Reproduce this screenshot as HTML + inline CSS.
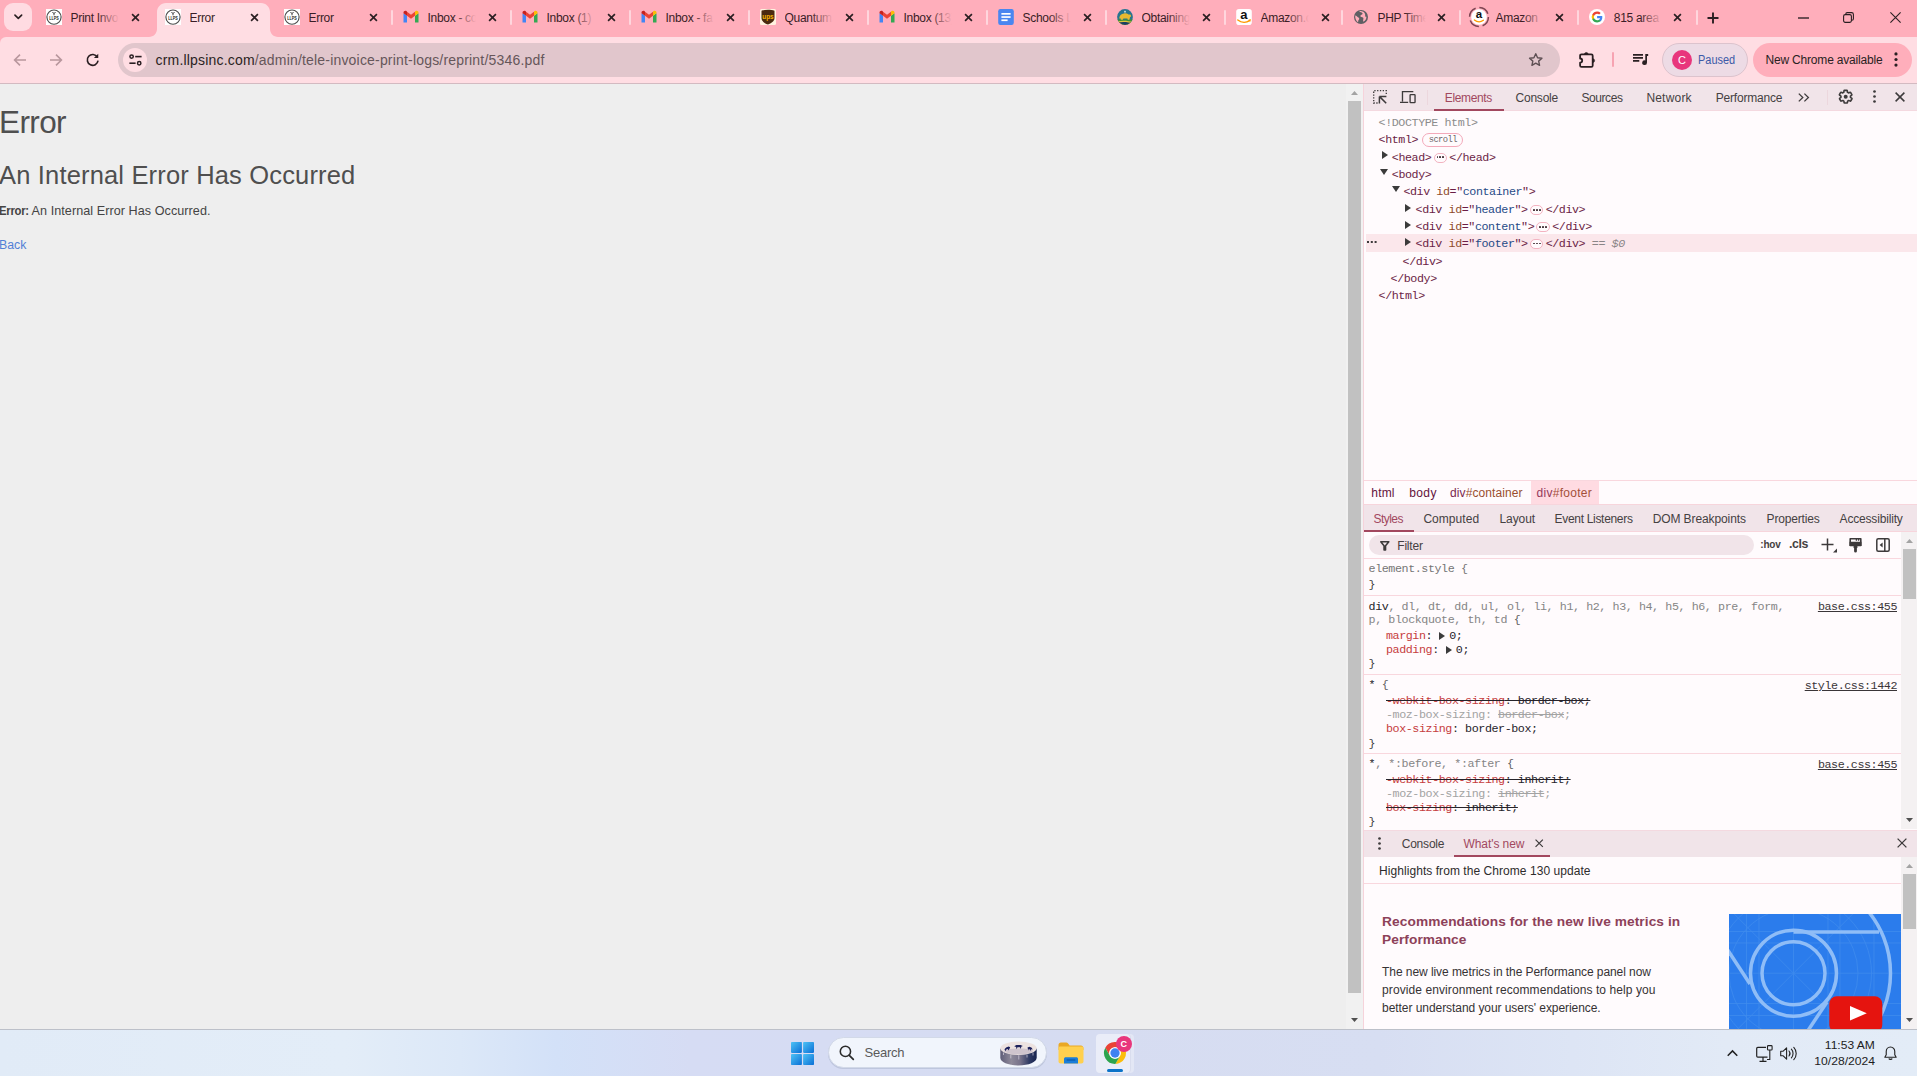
<!DOCTYPE html>
<html lang="en">
<head>
<meta charset="utf-8">
<title>Error</title>
<style>
*{box-sizing:border-box}
html,body{margin:0;padding:0}
body{width:1917px;height:1076px;position:relative;overflow:hidden;background:#eeeeee;font-family:"Liberation Sans",sans-serif;-webkit-font-smoothing:antialiased}
.abs{position:absolute}
svg{display:block;overflow:visible}
/* ---------- tab strip ---------- */
#tabstrip{position:absolute;left:0;top:0;width:1917px;height:50px;background:#ffaebb}
#toolbar{position:absolute;left:0;top:37px;width:1917px;height:46px;background:#ffdde3;border-top-left-radius:6px}
#tbline{position:absolute;left:0;top:83px;width:1917px;height:1px;background:#d3bac1}
.tab{position:absolute;top:3px;height:34px;width:113px}
.tab .fav{position:absolute;left:8px;top:6px;width:16px;height:16px}
.tab .ttl{position:absolute;left:32.5px;top:6.5px;width:48.5px;height:17px;overflow:hidden;white-space:nowrap;font-size:12px;line-height:16px;color:#3a1d26;letter-spacing:-0.3px}
.tab .ttl::after{content:"";position:absolute;right:0;top:0;width:22px;height:17px;background:linear-gradient(90deg,rgba(255,174,187,0),#ffaebb)}
.tab.active .ttl::after{background:linear-gradient(90deg,rgba(255,221,227,0),#ffdde3)}
.tab .cls{position:absolute;left:93px;top:9.8px;width:9px;height:9px}
.sep{position:absolute;top:10px;width:2px;height:15px;background:#ffd6dd;border-radius:1px}
#activebg{position:absolute;top:3px}
.badge{display:inline-block;font-size:8.8px;letter-spacing:-0.6px;line-height:12.6px;height:13.2px;padding:0 5.4px 0 6px;border:1px solid #f3a9ba;border-radius:7px;color:#6b6668;margin-left:3.6px;vertical-align:0.9px}

#dt{position:absolute;left:1363px;top:84px;width:554px;height:945px;background:#fffbfd;border-left:1px solid #f6d3db}
.dtbar{position:absolute;left:1364px;width:553px;background:#f1e4e9}
.dttab{position:absolute;font-size:12px;line-height:16px;color:#454142;white-space:nowrap;letter-spacing:-0.3px}
.mono{font-family:"Liberation Mono",monospace;font-size:11.7px;letter-spacing:-0.42px;white-space:pre}
.trow{position:absolute;height:17.3px;line-height:17.3px}
.srow{position:absolute;height:14.2px;line-height:14.2px}
.ell{display:inline-block;width:13.4px;height:9.8px;border:1px solid #f3b3c1;border-radius:5px;margin:0 2.4px 0 2.2px;vertical-align:-1.9px;position:relative;background:#fffbfd}
.ell i{position:absolute;top:2.6px;width:1.9px;height:1.9px;background:#4a3a3f;border-radius:0.6px}
.ell i:nth-child(1){left:2px}.ell i:nth-child(2){left:4.9px}.ell i:nth-child(3){left:7.8px}
.hline{position:absolute;height:1px;background:#f9d7de}
.pn{color:#c63d3e}.pv{color:#26232a}.gr{color:#a3a3a3}
.st{text-decoration:line-through;text-decoration-color:#26232a}
.lnk{position:absolute;text-decoration:underline;color:#3a3538}

#t_el{letter-spacing:-0.362px!important}
#t_co{letter-spacing:-0.222px!important}
#t_so{letter-spacing:-0.405px!important}
#t_ne{letter-spacing:0.197px!important}
#t_pe{letter-spacing:-0.19px!important}
#b_html{letter-spacing:0.176px!important}
#b_body{letter-spacing:0.356px!important}
#b_cont{letter-spacing:0.092px!important}
#b_foot{letter-spacing:0.266px!important}
#s_st{letter-spacing:-0.518px!important}
#s_cp{letter-spacing:0.046px!important}
#s_la{letter-spacing:-0.086px!important}
#s_ev{letter-spacing:-0.316px!important}
#s_dom{letter-spacing:-0.1px!important}
#s_pr{letter-spacing:-0.167px!important}
#s_ac{letter-spacing:-0.18px!important}
#f_filter{letter-spacing:-0.214px!important}
#f_hov{letter-spacing:-0.203px!important}
#f_cls{letter-spacing:-0.457px!important}
#d_co{letter-spacing:-0.205px!important}
#d_wn{letter-spacing:-0.062px!important}
#w_hl{letter-spacing:0.054px!important}
#w_h1{letter-spacing:0.089px!important}
#w_h2{letter-spacing:0.061px!important}
#w_p1{letter-spacing:-0.068px!important}
#w_p2{letter-spacing:0.085px!important}
#w_p3{letter-spacing:-0.062px!important}
#h1{letter-spacing:-0.6px!important}
#h2{letter-spacing:0.167px!important}
#pmsgr{letter-spacing:0.062px!important}
#back{letter-spacing:-0.015px!important}
#url{letter-spacing:0.187px!important}
#newchrome{letter-spacing:-0.191px!important}
#tsearch{letter-spacing:-0.221px!important}
</style>
</head>
<body>
<div id="tabstrip"></div>
<div id="toolbar"></div>
<div id="tbline"></div>
<div class="abs" style="left:4px;top:3px;width:28px;height:28px;border-radius:9px;background:#ffdbe2"></div>
<svg class="abs" style="left:13.7px;top:14px" width="8.6" height="6" viewBox="0 0 10 7"><path d="M1.1 1.3 L5 5.1 L8.9 1.3" fill="none" stroke="#2a1f22" stroke-width="1.9" stroke-linecap="round" stroke-linejoin="round"/></svg>
<svg id="activebg" style="left:149px" width="129" height="34" viewBox="0 0 129 34"><path d="M0,34 C4.4,34 8,30.4 8,26 L8,9 C8,4 12,0 17,0 L112,0 C117,0 121,4 121,9 L121,26 C121,30.4 124.6,34 129,34 Z" fill="#ffdde3"/></svg>
<div class="tab" style="left:38px"><svg class="fav" viewBox="0 0 16 16"><rect width="16" height="16" fill="#fff"/><circle cx="8" cy="8.1" r="7.1" fill="none" stroke="#4c4c4c" stroke-width="1.15"/><path d="M6.5 3 L8 4.7 L9.5 3 M8 4.7 V6.3" stroke="#222" stroke-width="0.9" fill="none"/><text x="8" y="10.9" font-size="4.5" font-weight="bold" text-anchor="middle" textLength="9.6" lengthAdjust="spacingAndGlyphs" fill="#222" font-family="Liberation Sans, sans-serif">LLPS</text></svg><div class="ttl">Print Invo</div><svg class="cls" style="left:93px" viewBox="0 0 9 9"><path d="M1.1 1.1 L7.9 7.9 M7.9 1.1 L1.1 7.9" stroke="#2a1f22" stroke-width="1.65" fill="none"/></svg></div>
<div class="tab active" style="left:157px"><svg class="fav" viewBox="0 0 16 16"><rect width="16" height="16" fill="#fff"/><circle cx="8" cy="8.1" r="7.1" fill="none" stroke="#4c4c4c" stroke-width="1.15"/><path d="M6.5 3 L8 4.7 L9.5 3 M8 4.7 V6.3" stroke="#222" stroke-width="0.9" fill="none"/><text x="8" y="10.9" font-size="4.5" font-weight="bold" text-anchor="middle" textLength="9.6" lengthAdjust="spacingAndGlyphs" fill="#222" font-family="Liberation Sans, sans-serif">LLPS</text></svg><div class="ttl">Error</div><svg class="cls" style="left:93px" viewBox="0 0 9 9"><path d="M1.1 1.1 L7.9 7.9 M7.9 1.1 L1.1 7.9" stroke="#2a1f22" stroke-width="1.65" fill="none"/></svg></div>
<div class="tab" style="left:276px"><svg class="fav" viewBox="0 0 16 16"><rect width="16" height="16" fill="#fff"/><circle cx="8" cy="8.1" r="7.1" fill="none" stroke="#4c4c4c" stroke-width="1.15"/><path d="M6.5 3 L8 4.7 L9.5 3 M8 4.7 V6.3" stroke="#222" stroke-width="0.9" fill="none"/><text x="8" y="10.9" font-size="4.5" font-weight="bold" text-anchor="middle" textLength="9.6" lengthAdjust="spacingAndGlyphs" fill="#222" font-family="Liberation Sans, sans-serif">LLPS</text></svg><div class="ttl">Error</div><svg class="cls" style="left:93px" viewBox="0 0 9 9"><path d="M1.1 1.1 L7.9 7.9 M7.9 1.1 L1.1 7.9" stroke="#2a1f22" stroke-width="1.65" fill="none"/></svg></div>
<div class="tab" style="left:395px"><svg class="fav" viewBox="0 0 16 16"><path d="M0.5 13.6 V4.2 L4 6.8 V13.6 Z" fill="#4285f4"/><path d="M15.5 13.6 V4.2 L12 6.8 V13.6 Z" fill="#34a853"/><path d="M4 6.8 L8 9.8 L12 6.8 V2.8 L8 5.8 L4 2.8 Z" fill="#ea4335"/><path d="M0.5 4.2 V3.6 C0.5 2 2.4 1.2 3.7 2.2 L4 2.8 V6.8 Z" fill="#c5221f"/><path d="M15.5 4.2 V3.6 C15.5 2 13.6 1.2 12.3 2.2 L12 2.8 V6.8 Z" fill="#fbbc04"/></svg><div class="ttl">Inbox - co</div><svg class="cls" style="left:93px" viewBox="0 0 9 9"><path d="M1.1 1.1 L7.9 7.9 M7.9 1.1 L1.1 7.9" stroke="#2a1f22" stroke-width="1.65" fill="none"/></svg></div>
<div class="tab" style="left:514px"><svg class="fav" viewBox="0 0 16 16"><path d="M0.5 13.6 V4.2 L4 6.8 V13.6 Z" fill="#4285f4"/><path d="M15.5 13.6 V4.2 L12 6.8 V13.6 Z" fill="#34a853"/><path d="M4 6.8 L8 9.8 L12 6.8 V2.8 L8 5.8 L4 2.8 Z" fill="#ea4335"/><path d="M0.5 4.2 V3.6 C0.5 2 2.4 1.2 3.7 2.2 L4 2.8 V6.8 Z" fill="#c5221f"/><path d="M15.5 4.2 V3.6 C15.5 2 13.6 1.2 12.3 2.2 L12 2.8 V6.8 Z" fill="#fbbc04"/></svg><div class="ttl">Inbox (1)</div><svg class="cls" style="left:93px" viewBox="0 0 9 9"><path d="M1.1 1.1 L7.9 7.9 M7.9 1.1 L1.1 7.9" stroke="#2a1f22" stroke-width="1.65" fill="none"/></svg></div>
<div class="tab" style="left:633px"><svg class="fav" viewBox="0 0 16 16"><path d="M0.5 13.6 V4.2 L4 6.8 V13.6 Z" fill="#4285f4"/><path d="M15.5 13.6 V4.2 L12 6.8 V13.6 Z" fill="#34a853"/><path d="M4 6.8 L8 9.8 L12 6.8 V2.8 L8 5.8 L4 2.8 Z" fill="#ea4335"/><path d="M0.5 4.2 V3.6 C0.5 2 2.4 1.2 3.7 2.2 L4 2.8 V6.8 Z" fill="#c5221f"/><path d="M15.5 4.2 V3.6 C15.5 2 13.6 1.2 12.3 2.2 L12 2.8 V6.8 Z" fill="#fbbc04"/></svg><div class="ttl">Inbox - fa</div><svg class="cls" style="left:93px" viewBox="0 0 9 9"><path d="M1.1 1.1 L7.9 7.9 M7.9 1.1 L1.1 7.9" stroke="#2a1f22" stroke-width="1.65" fill="none"/></svg></div>
<div class="tab" style="left:752px"><svg class="fav" viewBox="0 0 16 16"><rect width="16" height="16" rx="1.5" fill="#fff3e0"/><path d="M1.5 1.8 C5 0.4 11 0.4 14.5 1.8 V9 C14.5 12.5 11 14.3 8 15.6 C5 14.3 1.5 12.5 1.5 9 Z" fill="#4a2a10"/><text x="8" y="10.2" font-size="6.4" font-weight="bold" text-anchor="middle" fill="#f5b400" font-family="Liberation Sans, sans-serif">ups</text></svg><div class="ttl">Quantum</div><svg class="cls" style="left:93px" viewBox="0 0 9 9"><path d="M1.1 1.1 L7.9 7.9 M7.9 1.1 L1.1 7.9" stroke="#2a1f22" stroke-width="1.65" fill="none"/></svg></div>
<div class="tab" style="left:871px"><svg class="fav" viewBox="0 0 16 16"><path d="M0.5 13.6 V4.2 L4 6.8 V13.6 Z" fill="#4285f4"/><path d="M15.5 13.6 V4.2 L12 6.8 V13.6 Z" fill="#34a853"/><path d="M4 6.8 L8 9.8 L12 6.8 V2.8 L8 5.8 L4 2.8 Z" fill="#ea4335"/><path d="M0.5 4.2 V3.6 C0.5 2 2.4 1.2 3.7 2.2 L4 2.8 V6.8 Z" fill="#c5221f"/><path d="M15.5 4.2 V3.6 C15.5 2 13.6 1.2 12.3 2.2 L12 2.8 V6.8 Z" fill="#fbbc04"/></svg><div class="ttl">Inbox (13)</div><svg class="cls" style="left:93px" viewBox="0 0 9 9"><path d="M1.1 1.1 L7.9 7.9 M7.9 1.1 L1.1 7.9" stroke="#2a1f22" stroke-width="1.65" fill="none"/></svg></div>
<div class="tab" style="left:990px"><svg class="fav" viewBox="0 0 16 16"><rect x="0.2" y="0" width="15.6" height="16" rx="2.2" fill="#4a86f0"/><rect x="3.4" y="4" width="9.2" height="1.7" fill="#fff"/><rect x="3.4" y="7.2" width="9.2" height="1.7" fill="#fff"/><rect x="3.4" y="10.4" width="6.2" height="1.7" fill="#fff"/></svg><div class="ttl">Schools Li</div><svg class="cls" style="left:93px" viewBox="0 0 9 9"><path d="M1.1 1.1 L7.9 7.9 M7.9 1.1 L1.1 7.9" stroke="#2a1f22" stroke-width="1.65" fill="none"/></svg></div>
<div class="tab" style="left:1109px"><svg class="fav" viewBox="0 0 16 16"><defs><clipPath id="sealc"><circle cx="8" cy="8" r="7.9"/></clipPath></defs><g clip-path="url(#sealc)"><rect width="16" height="16" fill="#27748f"/><rect y="10.4" width="16" height="6" fill="#3d8f3c"/><path d="M0 12.6 C5 11.4 11 11.6 16 13.4 V16 H0 Z" fill="#e3c33c"/><path d="M0 13.8 C5 12.6 11 12.8 16 14.6 V16 H0 Z" fill="#1c3f63"/><path d="M2.2 9.6 C2.2 6.6 4.2 4.6 7 4.4 C9 4.2 10.4 4.6 11.6 5.4 L13.4 5.6 L14.2 7.2 L13 8.2 L12.4 10.8 H10.8 L10.4 9.4 H6.4 L5.8 10.8 H3.8 L3.6 9.4 Z" fill="#e8b92f"/><path d="M8 1.4 L8.5 2.5 L9.6 2.6 L8.8 3.3 L9 4.4 L8 3.8 L7 4.4 L7.2 3.3 L6.4 2.6 L7.5 2.5 Z" fill="#e9f2f5" transform="translate(0,-0.3) scale(0.8) translate(2,0.6)"/></g></svg><div class="ttl">Obtaining</div><svg class="cls" style="left:93px" viewBox="0 0 9 9"><path d="M1.1 1.1 L7.9 7.9 M7.9 1.1 L1.1 7.9" stroke="#2a1f22" stroke-width="1.65" fill="none"/></svg></div>
<div class="tab" style="left:1228px"><svg class="fav" viewBox="0 0 16 16"><rect x="0.2" y="0" width="15.6" height="16" rx="2.8" fill="#fff"/><text x="7.8" y="9.8" font-size="13" font-weight="bold" text-anchor="middle" fill="#111" font-family="Liberation Sans, sans-serif">a</text><path d="M1.8 11 C5.6 14 10.4 13.8 13.6 11.6" stroke="#f90" stroke-width="1.5" fill="none" stroke-linecap="round"/><path d="M14.8 10 L14.3 12.8 L12 11 Z" fill="#f90"/></svg><div class="ttl">Amazon.c</div><svg class="cls" style="left:93px" viewBox="0 0 9 9"><path d="M1.1 1.1 L7.9 7.9 M7.9 1.1 L1.1 7.9" stroke="#2a1f22" stroke-width="1.65" fill="none"/></svg></div>
<div class="tab" style="left:1345px"><svg class="fav" viewBox="0 0 16 16"><circle cx="8" cy="8" r="7" fill="#5f5f63"/><path d="M6.2 2.2 C7 3.4 9.4 3 9.6 4.6 C9.7 5.8 7.6 5.6 7.4 7 C7.2 8.2 9.4 7.8 10.2 8.8 C11 9.8 9.6 11.4 10.4 12.8 C12.6 11.6 13.6 9.6 13.4 7.4 C12.8 8 12 7.4 12.2 6.4 C12.4 5.2 11.6 3.6 10.4 2.8 C9 2 7.4 1.9 6.2 2.2 Z" fill="#ffaebb"/><path d="M2.2 6.4 C3.6 6.6 4.2 7.8 5.4 8.4 C6.6 9 6.4 10.4 5.6 11 C5 11.6 5.4 12.8 5 13.2 C3.2 12 2 9.4 2.2 6.4 Z" fill="#ffaebb"/></svg><div class="ttl">PHP Time</div><svg class="cls" style="left:91.5px" viewBox="0 0 9 9"><path d="M1.1 1.1 L7.9 7.9 M7.9 1.1 L1.1 7.9" stroke="#2a1f22" stroke-width="1.65" fill="none"/></svg></div>
<div class="tab" style="left:1463px"><svg class="fav" viewBox="0 0 16 16" style="overflow:visible"><circle cx="8" cy="8" r="9.4" fill="none" stroke="#7d4552" stroke-width="1.5" stroke-dasharray="11 3.8"/><circle cx="8" cy="8" r="7.8" fill="#fff"/><text x="8" y="9.4" font-size="11.5" font-weight="bold" text-anchor="middle" fill="#111" font-family="Liberation Sans, sans-serif">a</text><path d="M3.4 11 C6.2 13.2 9.8 13.2 12.4 11.2" stroke="#f90" stroke-width="1.3" fill="none" stroke-linecap="round"/></svg><div class="ttl">Amazon</div><svg class="cls" style="left:91.5px" viewBox="0 0 9 9"><path d="M1.1 1.1 L7.9 7.9 M7.9 1.1 L1.1 7.9" stroke="#2a1f22" stroke-width="1.65" fill="none"/></svg></div>
<div class="tab" style="left:1581.3px"><svg class="fav" viewBox="0 0 16 16"><circle cx="8" cy="8" r="8" fill="#fff"/><path d="M13.3 8.13c0-.4-.04-.78-.1-1.14H8.1v2.16h2.92a2.5 2.5 0 0 1-1.08 1.64v1.36h1.75c1.02-.94 1.61-2.33 1.61-4.02z" fill="#4285f4"/><path d="M8.1 13.4c1.46 0 2.68-.48 3.58-1.3l-1.75-1.36c-.48.32-1.1.52-1.83.52-1.41 0-2.6-.95-3.03-2.23H3.27v1.4A5.4 5.4 0 0 0 8.1 13.4z" fill="#34a853"/><path d="M5.07 9.03a3.25 3.25 0 0 1 0-2.06v-1.4H3.27a5.4 5.4 0 0 0 0 4.86l1.8-1.4z" fill="#fbbc05"/><path d="M8.1 4.74c.8 0 1.5.27 2.07.8l1.55-1.55A5.2 5.2 0 0 0 8.1 2.6a5.4 5.4 0 0 0-4.83 2.97l1.8 1.4C5.5 5.69 6.69 4.74 8.1 4.74z" fill="#ea4335"/></svg><div class="ttl">815 area</div><svg class="cls" style="left:91.5px" viewBox="0 0 9 9"><path d="M1.1 1.1 L7.9 7.9 M7.9 1.1 L1.1 7.9" stroke="#2a1f22" stroke-width="1.65" fill="none"/></svg></div>
<div class="sep" style="left:391px"></div>
<div class="sep" style="left:510px"></div>
<div class="sep" style="left:629px"></div>
<div class="sep" style="left:748px"></div>
<div class="sep" style="left:867px"></div>
<div class="sep" style="left:986px"></div>
<div class="sep" style="left:1105px"></div>
<div class="sep" style="left:1224px"></div>
<div class="sep" style="left:1341px"></div>
<div class="sep" style="left:1459px"></div>
<div class="sep" style="left:1577.3px"></div>
<div class="sep" style="left:1695.8px"></div>
<svg class="abs" style="left:1706.5px;top:11.5px" width="12" height="12" viewBox="0 0 12 12"><path d="M6 0.5 V11.5 M0.5 6 H11.5" stroke="#2a1f22" stroke-width="1.9" fill="none"/></svg>
<svg class="abs" style="left:1798px;top:16.5px" width="11" height="2" viewBox="0 0 11 2"><path d="M0 1 H11" stroke="#2a1f22" stroke-width="1.35"/></svg>
<svg class="abs" style="left:1843px;top:11.5px" width="11" height="11" viewBox="0 0 11 11"><rect x="0.6" y="2.6" width="7.8" height="7.8" rx="1.6" fill="none" stroke="#2a1f22" stroke-width="1.1"/><path d="M2.8 2.4 V2 C2.8 1.1 3.5 0.6 4.2 0.6 H8.6 C9.6 0.6 10.4 1.4 10.4 2.4 V6.8 C10.4 7.6 9.8 8.2 9 8.2 H8.6" fill="none" stroke="#2a1f22" stroke-width="1.1"/></svg>
<svg class="abs" style="left:1889.5px;top:11.5px" width="11" height="11" viewBox="0 0 11 11"><path d="M0.4 0.4 L10.6 10.6 M10.6 0.4 L0.4 10.6" stroke="#2a1f22" stroke-width="1.1" fill="none"/></svg>
<svg class="abs" style="left:13px;top:53px" width="14" height="14" viewBox="0 0 14 14"><path d="M13 7 H2 M7 1.6 L1.6 7 L7 12.4" fill="none" stroke="#b9979d" stroke-width="1.6"/></svg>
<svg class="abs" style="left:48.5px;top:53px" width="14" height="14" viewBox="0 0 14 14"><path d="M1 7 H12 M7 1.6 L12.4 7 L7 12.4" fill="none" stroke="#b9979d" stroke-width="1.6"/></svg>
<svg class="abs" style="left:85.5px;top:53.2px" width="13.5" height="13.5" viewBox="0 0 15 15"><path d="M12.6 4.6 A6 6 0 1 0 13.4 8.6" fill="none" stroke="#2a1f22" stroke-width="1.8"/><path d="M13.6 0.8 V5.6 H8.8 Z" fill="#2a1f22"/></svg>
<div class="abs" style="left:118px;top:43px;width:1442px;height:34px;border-radius:17px;background:#e1c6cc"></div>
<div class="abs" style="left:123px;top:48px;width:24px;height:24px;border-radius:12px;background:#ffdde3"></div>
<svg class="abs" style="left:128.5px;top:53.5px" width="13" height="12" viewBox="0 0 13 12"><circle cx="2.6" cy="2.6" r="1.7" fill="none" stroke="#2a1f22" stroke-width="1.5"/><path d="M6.2 2.6 H12.6" stroke="#2a1f22" stroke-width="1.6"/><path d="M0.4 9.2 H6.6" stroke="#2a1f22" stroke-width="1.6"/><circle cx="10.2" cy="9.2" r="1.7" fill="none" stroke="#2a1f22" stroke-width="1.5"/></svg>
<div id="url" class="abs" style="left:155.5px;top:51px;height:18px;font-size:14px;line-height:18px;white-space:nowrap;color:#66565a;letter-spacing:-0.16px"><span style="color:#2a1f22">crm.llpsinc.com</span>/admin/tele-invoice-print-logs/reprint/5346.pdf</div>
<svg class="abs" style="left:1528.3px;top:52px" width="15.5" height="15.5" viewBox="0 0 17 17"><path d="M8.5 1.9 L10.5 6.3 L15.3 6.8 L11.7 10 L12.7 14.7 L8.5 12.3 L4.3 14.7 L5.3 10 L1.7 6.8 L6.5 6.3 Z" fill="none" stroke="#5d4f53" stroke-width="1.5" stroke-linejoin="round"/></svg>
<svg class="abs" style="left:1578.6px;top:50.7px" width="17" height="17" viewBox="0 0 17 17"><path d="M2.5 3.4 H12.3 Q13.7 3.4 13.7 4.8 V14.4 Q13.7 15.8 12.3 15.8 H2.5 Q1.1 15.8 1.1 14.4 V11.7 A2.1 2.1 0 0 0 1.1 7.5 V4.8 Q1.1 3.4 2.5 3.4 Z" fill="none" stroke="#2a1f22" stroke-width="1.8" stroke-linejoin="round"/><path d="M5.4 3.4 A1.9 1.9 0 0 1 9.2 3.4 Z M13.7 7.7 A1.9 1.9 0 0 1 13.7 11.5 Z" fill="#2a1f22" stroke="#2a1f22" stroke-width="0.6"/></svg>
<div class="abs" style="left:1612px;top:52px;width:2px;height:15px;border-radius:1px;background:#f7a3b2"></div>
<svg class="abs" style="left:1632.7px;top:53.7px" width="15.2" height="11.2" viewBox="0 0 15.2 11.2"><path d="M0 0.9 H10 M0 3.9 H10 M0 6.9 H6.3" stroke="#2a1f22" stroke-width="1.65"/><path d="M12.3 0 H15.2 V1.9 H14 V8.6 A2.4 2.4 0 1 1 12.3 6.4 Z" fill="#2a1f22"/></svg>
<div class="abs" style="left:1662px;top:43px;width:86px;height:34px;border-radius:17px;background:#eddbe5;border:1px solid #dcc3cd"></div>
<div class="abs" style="left:1672px;top:50px;width:20px;height:20px;border-radius:10px;background:#e8367c;color:#fff;font-size:11px;line-height:20px;text-align:center">C</div>
<div id="paused" class="abs" style="left:1698.3px;top:51.5px;font-size:12.3px;line-height:16px;color:#3c5aa8;white-space:nowrap;transform:scaleX(0.89);transform-origin:0 50%">Paused</div>
<div class="abs" style="left:1752.8px;top:43px;width:159.2px;height:34px;border-radius:17px;background:#ffaebb"></div>
<div id="newchrome" class="abs" style="left:1765.5px;top:51.5px;font-size:12px;line-height:16px;color:#2a1f22;letter-spacing:-0.38px;white-space:nowrap">New Chrome available</div>
<svg class="abs" style="left:1893.7px;top:52.3px" width="4" height="15" viewBox="0 0 4 15"><circle cx="2" cy="1.9" r="1.6" fill="#2a1f22"/><circle cx="2" cy="7.5" r="1.6" fill="#2a1f22"/><circle cx="2" cy="13.1" r="1.6" fill="#2a1f22"/></svg>
<div id="h1" class="abs" style="left:-1px;top:103.3px;font-size:31.5px;line-height:38px;color:#4f4f4f;white-space:nowrap;letter-spacing:-0.7px">Error</div>
<div id="h2" class="abs" style="left:-1px;top:159.6px;font-size:25.5px;line-height:30px;color:#4f4f4f;white-space:nowrap;letter-spacing:-0.3px">An Internal Error Has Occurred</div>
<div id="pmsg" class="abs" style="left:-1px;top:203px;font-size:12.6px;line-height:16px;color:#444;white-space:nowrap;letter-spacing:-0.3px"><b id="pmsgb" style="display:inline-block;transform:scaleX(0.9);transform-origin:0 50%;margin-right:-3.5px">Error:</b><span id="pmsgr"> An Internal Error Has Occurred.</span></div>
<div id="back" class="abs" style="left:-1px;top:236.8px;font-size:12.3px;line-height:16px;color:#5180d6;white-space:nowrap;letter-spacing:-0.3px">Back</div>
<div class="abs" style="left:1346px;top:84px;width:17px;height:945px;background:#f1f1f1"></div>
<div class="abs" style="left:1348px;top:101px;width:13px;height:892px;background:#c1c1c1"></div>
<svg class="abs" style="left:1351px;top:91px" width="7" height="4" viewBox="0 0 7 4"><path d="M0 4 L3.5 0 L7 4 Z" fill="#a3a3a3"/></svg>
<svg class="abs" style="left:1351px;top:1018px" width="7" height="4" viewBox="0 0 7 4"><path d="M0 0 L3.5 4 L7 0 Z" fill="#505050"/></svg>
<div id="dt"></div>
<div class="dtbar" style="top:84px;height:26px"></div>
<div class="hline" style="left:1364px;top:110px;width:553px;background:#f4d9e0"></div>
<svg class="abs" style="left:1373px;top:89.6px" width="14" height="14" viewBox="0 0 14 14"><path d="M4.6 13 H0.7 V0.7 H13.3 V4.6" fill="none" stroke="#3d3a3b" stroke-width="1.3" stroke-dasharray="1.3 1.5"/><path d="M6.4 6.4 H13.4 M6.4 6.4 V13.4 M6.6 6.6 L13.2 13.2" stroke="#3d3a3b" stroke-width="1.5" fill="none"/></svg>
<svg class="abs" style="left:1400.2px;top:90.8px" width="16.2" height="12.4" viewBox="0 0 17 13"><path d="M14 0.7 H2.6 V11 M0 11.9 H8.6" fill="none" stroke="#3d3a3b" stroke-width="1.4"/><rect x="10.6" y="3.8" width="5.2" height="8.4" rx="0.6" fill="none" stroke="#3d3a3b" stroke-width="1.4"/></svg>
<div class="abs" style="left:1427px;top:90px;width:1px;height:15px;background:#ecd7dd"></div>
<div id="t_el" class="dttab" style="left:1444.8px;top:89.5px;color:#a2485f">Elements</div>
<div id="t_co" class="dttab" style="left:1515.5px;top:89.5px">Console</div>
<div id="t_so" class="dttab" style="left:1581.4px;top:89.5px">Sources</div>
<div id="t_ne" class="dttab" style="left:1646.4px;top:89.5px">Network</div>
<div id="t_pe" class="dttab" style="left:1715.7px;top:89.5px">Performance</div>
<div class="abs" style="left:1433.5px;top:108.5px;width:70.5px;height:2px;background:#a2485f"></div>
<svg class="abs" style="left:1798px;top:92.5px" width="12" height="9" viewBox="0 0 12 9"><path d="M0.8 0.6 L4.8 4.5 L0.8 8.4 M6.4 0.6 L10.4 4.5 L6.4 8.4" fill="none" stroke="#3d3a3b" stroke-width="1.3"/></svg>
<div class="abs" style="left:1827px;top:90px;width:1px;height:15px;background:#ecd7dd"></div>
<svg class="abs" style="left:1838px;top:89.4px" width="15.4" height="15.4" viewBox="0 0 24 24"><path d="M19.4 13a7.5 7.5 0 0 0 0-2l2.1-1.6a.5.5 0 0 0 .1-.6l-2-3.5a.5.5 0 0 0-.6-.2l-2.5 1a7.3 7.3 0 0 0-1.7-1l-.4-2.6a.5.5 0 0 0-.5-.4h-4a.5.5 0 0 0-.5.4l-.4 2.6a7.3 7.3 0 0 0-1.7 1l-2.5-1a.5.5 0 0 0-.6.2l-2 3.5a.5.5 0 0 0 .1.6L4.6 11a7.5 7.5 0 0 0 0 2l-2.1 1.6a.5.5 0 0 0-.1.6l2 3.5c.1.2.400.3.600.2l2.5-1c.5.4 1.1.700 1.7 1l.4 2.6c0 .2.2.4.5.4h4c.2 0 .5-.2.5-.4l.4-2.6a7.3 7.3 0 0 0 1.7-1l2.5 1c.2.1.5 0 .6-.2l2-3.5a.5.5 0 0 0-.1-.6z" fill="none" stroke="#3d3a3b" stroke-width="2.5" stroke-linejoin="round"/><circle cx="12" cy="12" r="3.1" fill="#3d3a3b"/></svg>
<svg class="abs" style="left:1872.7px;top:90.2px" width="3" height="13" viewBox="0 0 3 13"><circle cx="1.5" cy="1.5" r="1.35" fill="#3d3a3b"/><circle cx="1.5" cy="6.5" r="1.35" fill="#3d3a3b"/><circle cx="1.5" cy="11.5" r="1.35" fill="#3d3a3b"/></svg>
<svg class="abs" style="left:1895px;top:91.8px" width="10" height="10" viewBox="0 0 10 10"><path d="M0.6 0.6 L9.4 9.4 M9.4 0.6 L0.6 9.4" stroke="#3d3a3b" stroke-width="1.5" fill="none"/></svg>
<div class="abs" style="left:1365.5px;top:234.3px;width:551.5px;height:17.3px;background:#fbe7eb"></div>
<div id="tr0" class="trow mono" style="left:1378.6px;top:114.75px"><span style="color:#8c8c8c">&lt;!DOCTYPE html&gt;</span></div>
<div id="tr1" class="trow mono" style="left:1378.6px;top:132.25px"><span style="color:#6b1d45">&lt;html&gt;</span><span class="badge">scroll</span></div>
<div id="tr2" class="trow mono" style="left:1391.8px;top:149.65px"><span style="color:#6b1d45">&lt;head&gt;</span><span class="ell"><i></i><i></i><i></i></span><span style="color:#6b1d45">&lt;/head&gt;</span></div>
<svg class="abs" style="left:1381.7px;top:151.4px" width="6" height="8" viewBox="0 0 6 8"><path d="M0 0 L6 4 L0 8 Z" fill="#3b3b3b"/></svg>
<div id="tr3" class="trow mono" style="left:1391.8px;top:166.85px"><span style="color:#6b1d45">&lt;body&gt;</span></div>
<svg class="abs" style="left:1380.3px;top:168.5px" width="8" height="6" viewBox="0 0 8 6"><path d="M0 0 L8 0 L4 6 Z" fill="#3b3b3b"/></svg>
<div id="tr4" class="trow mono" style="left:1403.4px;top:184.05px"><span style="color:#6b1d45">&lt;div</span> <span style="color:#8e4a2a">id</span><span style="color:#6b1d45">="</span><span style="color:#264a86">container</span><span style="color:#6b1d45">"&gt;</span></div>
<svg class="abs" style="left:1392px;top:185.7px" width="8" height="6" viewBox="0 0 8 6"><path d="M0 0 L8 0 L4 6 Z" fill="#3b3b3b"/></svg>
<div id="tr5" class="trow mono" style="left:1415.6px;top:202.05px"><span style="color:#6b1d45">&lt;div</span> <span style="color:#8e4a2a">id</span><span style="color:#6b1d45">="</span><span style="color:#264a86">header</span><span style="color:#6b1d45">"&gt;</span><span class="ell"><i></i><i></i><i></i></span><span style="color:#6b1d45">&lt;/div&gt;</span></div>
<svg class="abs" style="left:1405.1000000000001px;top:203.8px" width="6" height="8" viewBox="0 0 6 8"><path d="M0 0 L6 4 L0 8 Z" fill="#3b3b3b"/></svg>
<div id="tr6" class="trow mono" style="left:1415.6px;top:219.05px"><span style="color:#6b1d45">&lt;div</span> <span style="color:#8e4a2a">id</span><span style="color:#6b1d45">="</span><span style="color:#264a86">content</span><span style="color:#6b1d45">"&gt;</span><span class="ell"><i></i><i></i><i></i></span><span style="color:#6b1d45">&lt;/div&gt;</span></div>
<svg class="abs" style="left:1405.1000000000001px;top:220.8px" width="6" height="8" viewBox="0 0 6 8"><path d="M0 0 L6 4 L0 8 Z" fill="#3b3b3b"/></svg>
<div id="tr7" class="trow mono" style="left:1415.6px;top:235.85px"><span style="color:#6b1d45">&lt;div</span> <span style="color:#8e4a2a">id</span><span style="color:#6b1d45">="</span><span style="color:#264a86">footer</span><span style="color:#6b1d45">"&gt;</span><span class="ell"><i></i><i></i><i></i></span><span style="color:#6b1d45">&lt;/div&gt;</span><span style="color:#8a8587;font-style:italic"> == $0</span></div>
<svg class="abs" style="left:1405.1000000000001px;top:237.60000000000002px" width="6" height="8" viewBox="0 0 6 8"><path d="M0 0 L6 4 L0 8 Z" fill="#3b3b3b"/></svg>
<div id="tr8" class="trow mono" style="left:1402.6px;top:253.55px"><span style="color:#6b1d45">&lt;/div&gt;</span></div>
<div id="tr9" class="trow mono" style="left:1390.6px;top:270.75px"><span style="color:#6b1d45">&lt;/body&gt;</span></div>
<div id="tr10" class="trow mono" style="left:1378.6px;top:287.85px"><span style="color:#6b1d45">&lt;/html&gt;</span></div>
<svg class="abs" style="left:1367.3px;top:241px" width="10" height="2" viewBox="0 0 10 2"><rect x="0" y="0" width="2" height="2" fill="#3d3a3b"/><rect x="3.8" y="0" width="2" height="2" fill="#3d3a3b"/><rect x="7.6" y="0" width="2" height="2" fill="#3d3a3b"/></svg>
<div class="hline" style="left:1364px;top:480px;width:553px"></div>
<div class="abs" style="left:1530.5px;top:481px;width:68px;height:23px;background:#ffdbe2"></div>
<div id="b_html" class="dttab" style="left:1371.3px;top:484.5px;color:#64143c">html</div>
<div id="b_body" class="dttab" style="left:1409.3px;top:484.5px;color:#64143c">body</div>
<div id="b_cont" class="dttab" style="left:1450px;top:484.5px;color:#7a2850">div<span style="color:#9a4f2e">#container</span></div>
<div id="b_foot" class="dttab" style="left:1536.6px;top:484.5px;color:#94395a">div<span style="color:#a4503a">#footer</span></div>
<div class="dtbar" style="top:504px;height:28px;border-top:1px solid #f7d5dc;border-bottom:1px solid #f7d5dc"></div>
<div id="s_st" class="dttab" style="left:1373.4px;top:510.5px;color:#a2485f">Styles</div>
<div id="s_cp" class="dttab" style="left:1423.4px;top:510.5px">Computed</div>
<div id="s_la" class="dttab" style="left:1499.5px;top:510.5px">Layout</div>
<div id="s_ev" class="dttab" style="left:1554.6px;top:510.5px">Event Listeners</div>
<div id="s_dom" class="dttab" style="left:1652.7px;top:510.5px">DOM Breakpoints</div>
<div id="s_pr" class="dttab" style="left:1766.6px;top:510.5px">Properties</div>
<div id="s_ac" class="dttab" style="left:1839.6px;top:510.5px">Accessibility</div>
<div class="abs" style="left:1364px;top:529.5px;width:50px;height:2.4px;background:#a2485f"></div>
<div class="abs" style="left:1369.2px;top:535.2px;width:384.4px;height:19.8px;border-radius:10px;background:#f1e4e9"></div>
<svg class="abs" style="left:1380.3px;top:540.5px" width="9.6" height="9.6" viewBox="0 0 10 10"><path d="M0.8 0.8 H9.2 L5.8 5 V9.3 H4.2 V5 Z" fill="none" stroke="#3d3a3b" stroke-width="1.6" stroke-linejoin="round"/></svg>
<div id="f_filter" class="dttab" style="left:1397.3px;top:538.1px">Filter</div>
<div id="f_hov" class="dttab" style="left:1760.3px;top:536.8px;font-weight:bold;font-size:10px;letter-spacing:-0.5px">:hov</div>
<div id="f_cls" class="dttab" style="left:1789px;top:536.3px;font-weight:bold;font-size:12.4px;letter-spacing:-0.4px">.cls</div>
<svg class="abs" style="left:1820.5px;top:538px" width="17" height="16" viewBox="0 0 17 16"><path d="M6.5 0.5 V12.5 M0.5 6.5 H12.5" stroke="#3d3a3b" stroke-width="1.5" fill="none"/><path d="M16 10.5 V14.5 H12 Z" fill="#3d3a3b"/></svg>
<svg class="abs" style="left:1848.5px;top:537.5px" width="13" height="15" viewBox="0 0 13 15"><path d="M1.2 0.8 H11.8 V7.4 H1.2 Z" fill="none" stroke="#3d3a3b" stroke-width="1.6" stroke-linejoin="round"/><path d="M1.2 4.3 H11.8 V7.4 H1.2 Z M7.4 0.8 V2.8 M9.6 0.8 V2.8" fill="#3d3a3b" stroke="#3d3a3b" stroke-width="1.3"/><path d="M4.6 7.4 H8.4 V10 H7.9 V13.2 A1.4 1.4 0 0 1 5.1 13.2 V10 H4.6 Z" fill="#3d3a3b"/></svg>
<svg class="abs" style="left:1876px;top:538px" width="14" height="14" viewBox="0 0 14 14"><rect x="0.8" y="0.8" width="12.4" height="12.4" rx="1.5" fill="none" stroke="#3d3a3b" stroke-width="1.5"/><path d="M8.8 0.8 V13.2" stroke="#3d3a3b" stroke-width="1.5"/><path d="M6.6 4.6 V9.4 L3.6 7 Z" fill="#3d3a3b"/></svg>
<div class="hline" style="left:1364px;top:558px;width:537px"></div>
<div id="s0" class="srow mono" style="left:1368.6px;top:562.1px;"><span style="color:#757575">element.style {</span></div>
<div id="s1" class="srow mono" style="left:1368.6px;top:578.1px;"><span style="color:#3f3f3f">}</span></div>
<div class="hline" style="left:1364px;top:595px;width:537px"></div>
<div id="s2" class="srow mono" style="left:1368.6px;top:599.7px;"><span class="pv">div</span><span style="color:#858585">, dl, dt, dd, ul, ol, li, h1, h2, h3, h4, h5, h6, pre, form,</span></div>
<div id="s3" class="srow mono" style="left:1368.6px;top:613.3px;"><span style="color:#858585">p, blockquote, th, td </span><span style="color:#5f5f5f">{</span></div>
<div id="s4" class="srow mono" style="left:1386px;top:629px;"><span class="pn">margin</span><span class="pv">: </span><span class="pv" style="margin-left:10.5px">0;</span></div>
<div id="s5" class="srow mono" style="left:1386px;top:643.1px;"><span class="pn">padding</span><span class="pv">: </span><span class="pv" style="margin-left:10.5px">0;</span></div>
<svg class="abs" style="left:1439px;top:631.5px" width="6" height="8" viewBox="0 0 6 8"><path d="M0 0 L6 4 L0 8 Z" fill="#3b3b3b"/></svg>
<svg class="abs" style="left:1445.5px;top:645.6px" width="6" height="8" viewBox="0 0 6 8"><path d="M0 0 L6 4 L0 8 Z" fill="#3b3b3b"/></svg>
<div id="s6" class="srow mono" style="left:1368.6px;top:657.3px;"><span style="color:#3f3f3f">}</span></div>
<div class="hline" style="left:1364px;top:674px;width:537px"></div>
<div id="s7" class="srow mono" style="left:1368.6px;top:678.3px;"><span class="pv">*</span><span style="color:#5f5f5f"> {</span></div>
<div id="s8" class="srow mono" style="left:1386px;top:693.8px;"><span class="st"><span class="pn">-webkit-box-sizing</span><span class="pv">: border-box;</span></span></div>
<div id="s9" class="srow mono" style="left:1386px;top:708.3px;"><span class="gr">-moz-box-sizing: <span class="st" style="text-decoration-color:#a3a3a3">border-box</span>;</span></div>
<div id="s10" class="srow mono" style="left:1386px;top:722.1px;"><span class="pn">box-sizing</span><span class="pv">: border-box;</span></div>
<div id="s11" class="srow mono" style="left:1368.6px;top:736.5px;"><span style="color:#3f3f3f">}</span></div>
<div class="hline" style="left:1364px;top:753px;width:537px"></div>
<div id="s12" class="srow mono" style="left:1368.6px;top:757px;"><span class="pv">*</span><span style="color:#858585">, *:before, *:after </span><span style="color:#5f5f5f">{</span></div>
<div id="s13" class="srow mono" style="left:1386px;top:772.7px;"><span class="st"><span class="pn">-webkit-box-sizing</span><span class="pv">: inherit;</span></span></div>
<div id="s14" class="srow mono" style="left:1386px;top:787.1px;"><span class="gr">-moz-box-sizing: <span class="st" style="text-decoration-color:#a3a3a3">inherit</span>;</span></div>
<div id="s15" class="srow mono" style="left:1386px;top:801.3px;"><span class="st"><span class="pn">box-sizing</span><span class="pv">: inherit;</span></span></div>
<div id="s16" class="srow mono" style="left:1368.6px;top:815.3px;"><span style="color:#3f3f3f">}</span></div>
<div id="l0" class="srow mono lnk" style="right:20px;top:600.4px">base.css:455</div>
<div id="l1" class="srow mono lnk" style="right:20px;top:679.4px">style.css:1442</div>
<div id="l2" class="srow mono lnk" style="right:20px;top:758.4px">base.css:455</div>
<div class="abs" style="left:1901px;top:532px;width:16px;height:297px;background:#f4f1f2"></div>
<div class="abs" style="left:1903px;top:549px;width:13px;height:49.5px;background:#c1c1c1"></div>
<svg class="abs" style="left:1906px;top:539px" width="7" height="4" viewBox="0 0 7 4"><path d="M0 4 L3.5 0 L7 4 Z" fill="#a3a3a3"/></svg>
<svg class="abs" style="left:1906px;top:817.5px" width="7" height="4" viewBox="0 0 7 4"><path d="M0 0 L3.5 4 L7 0 Z" fill="#505050"/></svg>
<div class="dtbar" style="top:829.5px;height:27.3px;border-top:1px solid #f4d9e0"></div>
<svg class="abs" style="left:1378.3px;top:836.5px" width="3" height="13" viewBox="0 0 3 13"><circle cx="1.5" cy="1.5" r="1.35" fill="#3d3a3b"/><circle cx="1.5" cy="6.5" r="1.35" fill="#3d3a3b"/><circle cx="1.5" cy="11.5" r="1.35" fill="#3d3a3b"/></svg>
<div id="d_co" class="dttab" style="left:1401.7px;top:835.5px">Console</div>
<div id="d_wn" class="dttab" style="left:1463.4px;top:835.5px;color:#a2485f">What's new</div>
<svg class="abs" style="left:1534.6px;top:839px" width="8.4" height="8.4" viewBox="0 0 9 9"><path d="M0.6 0.6 L8.4 8.4 M8.4 0.6 L0.6 8.4" stroke="#3d3a3b" stroke-width="1.3" fill="none"/></svg>
<div class="abs" style="left:1454.4px;top:854.8px;width:95.4px;height:2px;background:#a2485f"></div>
<svg class="abs" style="left:1897px;top:838px" width="10" height="10" viewBox="0 0 10 10"><path d="M0.6 0.6 L9.4 9.4 M9.4 0.6 L0.6 9.4" stroke="#3d3a3b" stroke-width="1.3" fill="none"/></svg>
<div id="w_hl" class="dttab" style="left:1379.1px;top:862.8px;color:#2e2b2c">Highlights from the Chrome 130 update</div>
<div class="hline" style="left:1364px;top:883px;width:537px"></div>
<div id="w_h1" class="dttab" style="left:1382.1px;top:912.5px;font-size:13.7px;line-height:18px;font-weight:bold;color:#8d4159">Recommendations for the new live metrics in</div>
<div id="w_h2" class="dttab" style="left:1382.1px;top:930.5px;font-size:13.7px;line-height:18px;font-weight:bold;color:#8d4159">Performance</div>
<div id="w_p1" class="dttab" style="left:1382.1px;top:964.2px;color:#363234">The new live metrics in the Performance panel now</div>
<div id="w_p2" class="dttab" style="left:1382.1px;top:982.3px;color:#363234">provide environment recommendations to help you</div>
<div id="w_p3" class="dttab" style="left:1382.1px;top:1000px;color:#363234">better understand your users' experience.</div>
<svg class="abs" style="left:1729px;top:914px" width="172" height="115" viewBox="0 0 172 115">
<defs><clipPath id="imgc"><rect width="172" height="115"/></clipPath></defs>
<g clip-path="url(#imgc)"><rect width="172" height="115" fill="#2b7cec"/>
<g stroke="#3f8bee" stroke-width="0.8" fill="none"><path d="M0 17.5 H172 M0 29 H172 M0 59.2 H172 M0 89.5 H172 M0 101.5 H172 M17.5 0 V115 M30 0 V115 M64.5 0 V115 M99 0 V115 M111 0 V115 M145 0 V115"/><path d="M-10 -15.3 L130 124.7 M139 -15.3 L-1 124.7"/><circle cx="64.5" cy="59.2" r="64.5"/><circle cx="64.5" cy="59.2" r="78"/></g>
<g stroke="#8fbdf7" stroke-width="3.5" fill="none"><circle cx="64.5" cy="59.2" r="31.5"/><circle cx="64.5" cy="59.2" r="43"/><circle cx="64.5" cy="59.2" r="97"/><path d="M64.5 18.1 H150"/><path d="M-2 35 L21 70"/><path d="M98 88 L78 118"/></g>
<rect x="100.3" y="82.3" width="53" height="36" rx="7.5" fill="#e5140f"/><path d="M121 92 L137.8 99.3 L121 106.5 Z" fill="#fff"/></g></svg>
<div class="abs" style="left:1901px;top:857px;width:16px;height:172px;background:#f4f1f2"></div>
<div class="abs" style="left:1903px;top:874px;width:13px;height:55px;background:#c1c1c1"></div>
<svg class="abs" style="left:1906px;top:864px" width="7" height="4" viewBox="0 0 7 4"><path d="M0 4 L3.5 0 L7 4 Z" fill="#a3a3a3"/></svg>
<svg class="abs" style="left:1906px;top:1017.5px" width="7" height="4" viewBox="0 0 7 4"><path d="M0 0 L3.5 4 L7 0 Z" fill="#505050"/></svg>
<div class="abs" style="left:0;top:1029px;width:1917px;height:47px;background:linear-gradient(90deg,#e1ebf7 0%,#e3edf8 18%,#dce8f8 24%,#d3e1f8 29%,#d6dcf4 36%,#d6dcf1 57%,#d7def2 72%,#dde5f5 82%,#e2eaf6 90%,#e3ecf7 100%);border-top:1.5px solid #bcc0c9"></div>
<svg class="abs" style="left:791px;top:1042px" width="23" height="23" viewBox="0 0 23 23"><defs><linearGradient id="wl" x1="0" y1="0" x2="1" y2="1"><stop offset="0" stop-color="#4cc2f5"/><stop offset="1" stop-color="#0a6fd6"/></linearGradient></defs><rect x="0" y="0" width="10.9" height="10.9" rx="0.8" fill="url(#wl)"/><rect x="12.1" y="0" width="10.9" height="10.9" rx="0.8" fill="url(#wl)"/><rect x="0" y="12.1" width="10.9" height="10.9" rx="0.8" fill="url(#wl)"/><rect x="12.1" y="12.1" width="10.9" height="10.9" rx="0.8" fill="url(#wl)"/></svg>
<div class="abs" style="left:828px;top:1037px;width:218.5px;height:31px;border-radius:15.5px;background:#f1f5fc;border:1px solid #d2d9e8;box-shadow:0 1px 0 rgba(120,130,160,0.25)"></div>
<svg class="abs" style="left:838.6px;top:1045.3px" width="15.6" height="15.6" viewBox="0 0 17 17"><circle cx="7" cy="7" r="5.6" fill="none" stroke="#2b2b2b" stroke-width="1.7"/><path d="M11.2 11.2 L15.6 15.6" stroke="#2b2b2b" stroke-width="1.9" stroke-linecap="round"/></svg>
<div id="tsearch" class="abs" style="left:864.5px;top:1044px;font-size:13px;line-height:18px;color:#5a5a5a;letter-spacing:-0.15px;white-space:nowrap">Search</div>
<svg class="abs" style="left:1000px;top:1040.5px" width="37" height="25" viewBox="0 0 37 25"><defs><linearGradient id="dr" x1="0" y1="0" x2="1" y2="0"><stop offset="0" stop-color="#5f5d78"/><stop offset="0.3" stop-color="#8f8a9a"/><stop offset="0.55" stop-color="#77728a"/><stop offset="0.8" stop-color="#2f3a63"/><stop offset="1" stop-color="#17234f"/></linearGradient></defs>
<path d="M0.3 7.6 V16.8 C0.3 21.2 8.3 24.5 18.5 24.5 C28.7 24.5 36.7 21.2 36.7 16.8 V7.6 Z" fill="url(#dr)"/>
<ellipse cx="18.5" cy="7.3" rx="18.2" ry="6.7" fill="#ece2e0"/>
<path d="M3.5 10 C7 8.2 12 7.6 18.5 7.6 C25 7.6 30 8.2 33.5 10 C30 12.6 25 13.4 18.5 13.4 C12 13.4 7 12.6 3.5 10 Z" fill="#cfc4cd"/>
<g fill="#1b1f5a"><path d="M4.5 8.2 l1.6-1.7 l2.6-0.9 l1.5 0.6 l-0.7 1.6 l-1.1 1.8 l-0.6-1.6 l-1.5 0.6 l-0.9 1.6 Z"/><path d="M14.2 5.2 l2.2-1.2 l4.2 0.1 l2.2 0.8 l-1.6 0.9 l-0.3 2.2 l-1-1.8 l-2.4 0 l-1 2 l-0.4-2.2 Z"/><path d="M27.5 6.5 l2-0.7 l2.2 1 l1 1.7 l-1.4-0.2 l-0.6 1.6 l-0.7-1.4 l-1.5-0.2 l-0.2 1.5 Z"/></g>
<g stroke="#d9d2df" stroke-width="0.7"><path d="M3.5 11.5 V14 M10.8 13.6 V17.4 M18.8 14.2 V18.5 M27 13.5 V16.5 M33 11.5 V14.5"/></g></svg>
<svg class="abs" style="left:1058px;top:1042px" width="26" height="22" viewBox="0 0 26 22"><path d="M0.5 3 C0.5 1.6 1.5 0.6 2.9 0.6 H8.2 C9 0.6 9.6 0.9 10.1 1.5 L11.6 3.4 H23 C24.4 3.4 25.4 4.4 25.4 5.8 V8 H0.5 Z" fill="#e9a825"/>
<path d="M0.5 6.2 C0.5 5.3 1.3 4.6 2.2 4.6 H23.8 C24.7 4.6 25.5 5.3 25.5 6.2 V19.6 C25.5 20.8 24.5 21.6 23.4 21.6 H2.6 C1.5 21.6 0.5 20.8 0.5 19.6 Z" fill="#ffd04e"/>
<path d="M6 21.6 V16.8 C6 15.8 6.8 15.2 7.7 15.2 H18.3 C19.2 15.2 20 15.8 20 16.8 V21.6 Z" fill="#1a7dd8"/><rect x="8.5" y="17.3" width="9" height="1.4" rx="0.7" fill="#0d5fb0"/></svg>
<div class="abs" style="left:1100px;top:1034px;width:34px;height:38.5px;border-radius:4px;background:#e3e7f5"></div><div class="abs" style="left:1096px;top:1034px;width:34px;height:38.5px;border-radius:4px;background:#eaedf8;box-shadow:1px 0 0 #d9ddee"></div>
<svg class="abs" style="left:1103.2px;top:1041px" width="24" height="24" viewBox="0 0 48 48">
<path d="M4.6 13.61 A22 22 0 0 1 42.69 12.4 L24 12.4 A11.6 11.6 0 0 0 13.95 29.8 Z" fill="#e94235"/>
<path d="M42.69 12.4 A22 22 0 0 1 24.7 45.99 L34.05 29.8 A11.6 11.6 0 0 0 24 12.4 Z" fill="#fbbd0b"/>
<path d="M24.7 45.99 A22 22 0 0 1 4.6 13.61 L13.95 29.8 A11.6 11.6 0 0 0 34.05 29.8 Z" fill="#2da44e"/>
<circle cx="24" cy="24" r="11.6" fill="#fff"/><circle cx="24" cy="24" r="9.3" fill="#3f82f0"/></svg>
<div class="abs" style="left:1115.8px;top:1035.9px;width:16px;height:16px;border-radius:8px;background:#e8367c;color:#fff;font-size:9px;font-weight:bold;line-height:16px;text-align:center">C</div>
<div class="abs" style="left:1107.2px;top:1069px;width:15.7px;height:3px;border-radius:1.5px;background:#0b73c9"></div>
<svg class="abs" style="left:1726.8px;top:1049.5px" width="11" height="6.5" viewBox="0 0 12 7"><path d="M0.8 6.2 L6 1 L11.2 6.2" fill="none" stroke="#222" stroke-width="1.7"/></svg>
<svg class="abs" style="left:1755.5px;top:1044.5px" width="18" height="17" viewBox="0 0 18 17"><path d="M10 2.4 H1.8 C1.2 2.4 0.7 2.9 0.7 3.5 V11 C0.7 11.6 1.2 12.1 1.8 12.1 H11.5 M3.5 16.3 H10.5 M7 12.1 V16.3" fill="none" stroke="#222" stroke-width="1.2"/><rect x="11.5" y="0.6" width="4.6" height="4.4" rx="0.8" fill="none" stroke="#222" stroke-width="1.1"/><path d="M13.8 5 V14.5 H11" fill="none" stroke="#222" stroke-width="1.1"/></svg>
<svg class="abs" style="left:1780px;top:1045.5px" width="18" height="15" viewBox="0 0 18 15"><path d="M0.7 5.2 H3.2 L6.6 1.8 V13.2 L3.2 9.8 H0.7 Z" fill="none" stroke="#222" stroke-width="1.1" stroke-linejoin="round"/><path d="M9 5 C10.2 6.4 10.2 8.6 9 10 M11.4 3.2 C13.6 5.6 13.6 9.4 11.4 11.8 M13.8 1.4 C17 4.8 17 10.2 13.8 13.6" fill="none" stroke="#222" stroke-width="1.1" stroke-linecap="round"/></svg>
<div id="ttime" class="abs" style="right:42.4px;top:1037.9px;font-size:10.8px;line-height:15px;color:#1d1d1d;white-space:nowrap;transform:scaleX(1.115);transform-origin:100% 50%">11:53 AM</div>
<div id="tdate" class="abs" style="right:42.4px;top:1053.8px;font-size:10.8px;line-height:15px;color:#1d1d1d;white-space:nowrap;transform:scaleX(1.125);transform-origin:100% 50%">10/28/2024</div>
<svg class="abs" style="left:1883.6px;top:1045.8px" width="13" height="15" viewBox="0 0 14 16"><path d="M7 1 C4.2 1 2.4 3.2 2.4 5.8 V9.4 L0.9 12 H13.1 L11.6 9.4 V5.8 C11.6 3.2 9.8 1 7 1 Z" fill="none" stroke="#222" stroke-width="1.2" stroke-linejoin="round"/><path d="M5.2 13.4 C5.6 14.6 8.4 14.6 8.8 13.4" fill="none" stroke="#222" stroke-width="1.2"/></svg>
</body>
</html>
